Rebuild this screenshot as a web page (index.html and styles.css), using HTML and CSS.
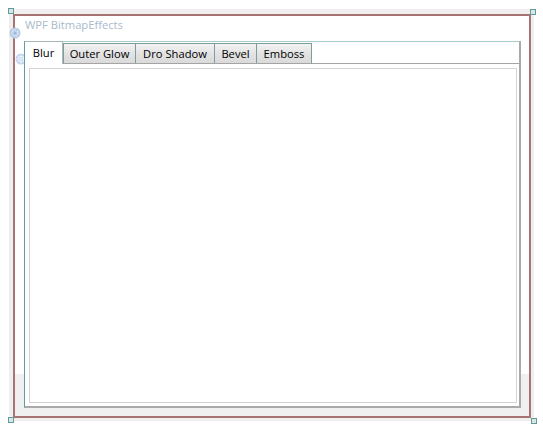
FILE: index.html
```html
<!DOCTYPE html>
<html>
<head>
<meta charset="utf-8">
<link rel="stylesheet" href="styles.css">
</head>
<body>
<div class="stage">
  <div class="window">
    <div class="title">WPF BitmapEffects</div>
    <div class="tabctl">
      <div class="strip">
        <div class="tab sel t1">Blur</div>
        <div class="tab t2">Outer Glow</div>
        <div class="tab t3">Dro Shadow</div>
        <div class="tab t4">Bevel</div>
        <div class="tab t5">Emboss</div>
      </div>
      <div class="panel">
        <div class="inner"></div>
      </div>
    </div>
  </div>
  <span class="handle h-tl"></span>
  <span class="handle h-tr"></span>
  <span class="handle h-br"></span>
  <span class="handle h-bl"></span>
  <svg class="ico ico-rot" width="12" height="12" viewBox="0 0 12 12">
    <circle cx="6" cy="6" r="5.5" fill="#b9cde9"/>
    <circle cx="6" cy="6" r="3" fill="none" stroke="#e8f0fb" stroke-width="1.2" stroke-dasharray="1.5 1.2"/>
    <circle cx="6" cy="6" r="1.2" fill="#9fb9de"/>
  </svg>
  <svg class="ico ico-move" width="12" height="12" viewBox="0 0 12 12">
    <circle cx="6" cy="6" r="5.5" fill="#c3d5ee"/>
    <path d="M6 1.5V10.5M1.5 6H10.5M3.5 3.5V8.5M8.5 3.5V8.5M3.5 3.5H8.5M3.5 8.5H8.5" stroke="#eef4fc" stroke-width="0.9" fill="none"/>
  </svg>
</div>
</body>
</html>
```
FILE: styles.css
```css
html, body {
  margin: 0;
  padding: 0;
  background: #ffffff;
}
body {
  width: 543px;
  height: 436px;
  overflow: hidden;
  font-family: "Segoe UI", "Open Sans", "Noto Sans", sans-serif;
}
.stage {
  position: relative;
  margin: 9px 0 0 9px;
  width: 525px;
  height: 412px;
  box-sizing: border-box;
  padding: 5px 3px 3px 4px;
  background: #efefef;
}
.window {
  height: 404px;
  width: 518px;
  box-sizing: border-box;
  border: 2px solid #a87373;
  background: linear-gradient(#ffffff 358px, #f0f0f0 358px);
  display: flex;
  flex-direction: column;
}
.title {
  height: 25px;
  box-sizing: border-box;
  padding: 1px 0 0 10px;
  font-size: 11.2px;
  line-height: 15px;
  color: #a9bacb;
  flex: none;
}
.tabctl {
  margin-left: 9px;
  width: 497px;
  height: 367px;
  box-sizing: border-box;
  border-top: 1px solid #a6cccc;
  border-left: 1px solid #5f9e9e;
  border-right: 2px solid #a9a9a9;
  border-bottom: 2px solid #a9a9a9;
  display: flex;
  flex-direction: column;
  flex: none;
}
.strip {
  display: flex;
  align-items: flex-end;
  height: 22px;
  margin: -1px 0 0 -1px;
  flex: none;
}
.tab {
  height: 20px;
  box-sizing: border-box;
  border: 1px solid #7f9d9d;
  border-right: none;
  border-bottom: none;
  background: linear-gradient(#f3f3f3, #e3e3e3 50%, #dadada);
  font-size: 11.2px;
  line-height: 19px;
  color: #000;
  text-align: center;
  white-space: nowrap;
}
.tab.sel {
  height: 23px;
  margin-bottom: -1px;
  background: #ffffff;
  border: 1px solid #a9b9b9;
  border-left-color: #5f9e9e;
  border-bottom: none;
  line-height: 21px;
  position: relative;
  z-index: 1;
}
.t1 { width: 39px; }
.t2 { width: 72px; }
.t3 { width: 79px; }
.t4 { width: 42px; }
.t5 { width: 56px; border-right: 1px solid #7f9d9d; }
.panel {
  flex: 1;
  border-top: 1px solid #a4a4a4;
  padding: 4px 2px 3px 4px;
  display: flex;
  background: #ffffff;
}
.inner {
  flex: 1;
  border: 1px solid #d4d4d4;
  background: #ffffff;
}
.handle {
  position: absolute;
  width: 6px;
  height: 6px;
  box-sizing: border-box;
  border: 1px solid #5e9b9b;
  background: #dde4e4;
}
.h-tl { left: -1px; top: -1px; }
.h-tr { left: 521px; top: 0px; }
.h-br { left: 522px; top: 409px; }
.h-bl { left: -1px; top: 408px; }
.ico {
  position: absolute;
}
.ico-rot { left: 0px; top: 18px; }
.ico-move { left: 6px; top: 44px; z-index: -0; }
```
